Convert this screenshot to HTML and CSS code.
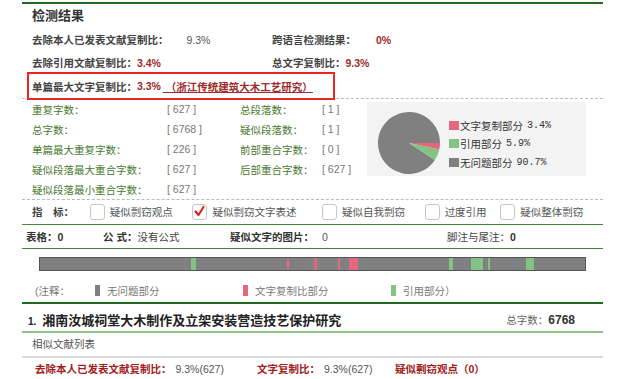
FILE: index.html
```html
<!DOCTYPE html>
<html lang="zh-CN">
<head>
  <meta charset="UTF-8">
  <title>检测结果</title>
  <link rel="stylesheet" href="styles.css">
</head>
<body>
  <div class="report">
    <h1 class="title">检测结果</h1>

    <div class="sum-row">
      <div class="sum-col"><span class="lbl">去除本人已发表文献复制比：</span><span class="val-plain first">9.3%</span></div>
      <div class="sum-col"><span class="lbl">跨语言检测结果：</span><span class="val-red cross">0%</span></div>
    </div>
    <div class="sum-row">
      <div class="sum-col"><span class="lbl">去除引用文献复制比：</span><span class="val-red">3.4%</span></div>
      <div class="sum-col"><span class="lbl">总文字复制比：</span><span class="val-red">9.3%</span></div>
    </div>
    <div class="sum-row sum-last">
      <div class="mark-box"></div>
      <span class="lbl">单篇最大文字复制比：</span><span class="val-red">3.3%</span><a class="src-link" href="#">&nbsp;（浙江传统建筑大木工艺研究）</a>
    </div>

    <div class="stats">
      <div class="stats-grid">
        <span class="s-lbl">重复字数：</span><span class="s-val">[ 627 ]</span>
        <span class="s-lbl">总段落数：</span><span class="s-val">[ 1 ]</span>
        <span class="s-lbl">总字数：</span><span class="s-val">[ 6768 ]</span>
        <span class="s-lbl">疑似段落数：</span><span class="s-val">[ 1 ]</span>
        <span class="s-lbl">单篇最大重复字数：</span><span class="s-val">[ 226 ]</span>
        <span class="s-lbl">前部重合字数：</span><span class="s-val">[ 0 ]</span>
        <span class="s-lbl">疑似段落最大重合字数：</span><span class="s-val">[ 627 ]</span>
        <span class="s-lbl">后部重合字数：</span><span class="s-val">[ 627 ]</span>
        <span class="s-lbl">疑似段落最小重合字数：</span><span class="s-val">[ 627 ]</span>
      </div>
      <div class="pie-box">
        <svg class="pie" width="82" height="74" viewBox="0 0 82 74">
          <g transform="translate(42 41)">
            <path d="M0 0 L25.86 17.10 A31 31 0 1 1 31 0 Z" fill="#808080"/>
            <path d="M0 0 L31 0 A31 31 0 0 1 30.30 6.57 Z" fill="#e3677d"/>
            <path d="M0 0 L30.30 6.57 A31 31 0 0 1 25.86 17.10 Z" fill="#85c384"/>
          </g>
        </svg>
        <ul class="pie-legend">
          <li><i class="sw sw-red"></i>文字复制部分 <em>3.4%</em></li>
          <li><i class="sw sw-green"></i>引用部分 <em>5.9%</em></li>
          <li><i class="sw sw-gray"></i>无问题部分 <em>90.7%</em></li>
        </ul>
      </div>
    </div>

    <div class="indicators">
      <span class="ind-lbl">指　标：</span>
      <label class="chk"><span class="box"></span>疑似剽窃观点</label>
      <label class="chk"><span class="box"><svg width="13" height="13" viewBox="0 0 13 13"><path d="M2.5 6.5 L5.5 10 L10.5 2" fill="none" stroke="#e02424" stroke-width="2.2" stroke-linecap="round" stroke-linejoin="round"/></svg></span>疑似剽窃文字表述</label>
      <label class="chk"><span class="box"></span>疑似自我剽窃</label>
      <label class="chk"><span class="box"></span>过度引用</label>
      <label class="chk"><span class="box"></span>疑似整体剽窃</label>
    </div>

    <div class="counts">
      <span class="c-col c1"><b class="c-lbl">表格：</b><b>0</b></span>
      <span class="c-col c2"><b class="c-lbl">公 式：</b>没有公式</span>
      <span class="c-col c3"><b class="c-lbl">疑似文字的图片：</b><span class="c-num">0</span></span>
      <span class="c-col"><span class="c-lbl">脚注与尾注：</span><b>0</b></span>
    </div>

    <div class="bar-area">
      <svg class="bar" width="547" height="14" viewBox="0 0 547 14">
        <rect x="0.5" y="0.5" width="546" height="13" fill="#808080" stroke="#555"/>
        <rect x="152" y="1" width="5" height="12" fill="#85c384"/>
        <rect x="248" y="1" width="2" height="12" fill="#e3677d"/>
        <rect x="275" y="1" width="3" height="12" fill="#e3677d"/>
        <rect x="299" y="1" width="2" height="12" fill="#e3677d"/>
        <rect x="310" y="1" width="9" height="12" fill="#e3677d"/>
        <rect x="410" y="1" width="4" height="12" fill="#85c384"/>
        <rect x="432" y="1" width="12" height="12" fill="#85c384"/>
        <rect x="449" y="1" width="2" height="12" fill="#85c384"/>
        <rect x="487" y="1" width="8" height="12" fill="#85c384"/>
      </svg>
      <div class="bar-legend">
        <span class="bl-note">(注释：</span>
        <span class="bl-item"><i class="bl-sw sw-gray"></i>无问题部分</span>
        <span class="bl-item"><i class="bl-sw sw-red"></i>文字复制比部分</span>
        <span class="bl-item"><i class="bl-sw sw-green"></i>引用部分）</span>
      </div>
    </div>

    <div class="doc-head">
      <div class="doc-title"><span class="doc-no">1.</span>湘南汝城祠堂大木制作及立架安装营造技艺保护研究</div>
      <div class="doc-total">总字数：<b>6768</b></div>
    </div>
    <div class="doc-sub">相似文献列表</div>
    <div class="doc-row">
      <span class="d-col d1"><b class="d-lbl">去除本人已发表文献复制比：</b>9.3%(627)</span>
      <span class="d-col d2"><b class="d-lbl">文字复制比：</b>9.3%(627)</span>
      <span class="d-col"><b class="d-lbl">疑似剽窃观点（0）</b></span>
    </div>
  </div>
</body>
</html>
```

FILE: styles.css
```css
body {
  margin: 0;
  padding-top: 2px;
  background-color: #fff;
  font-family: "Liberation Sans", "Noto Sans CJK SC", sans-serif;
  font-size: 10.5px;
  color: #555;
}

.report {
  margin-left: 22px;
  width: 581px;
  border-top: 2px solid #1f6b1f;
}

.title {
  margin: 0;
  height: 24px;
  padding-left: 10px;
  font-size: 13px;
  line-height: 24px;
  color: #333;
}

/* summary rows */
.sum-row {
  display: flex;
  align-items: center;
  height: 23px;
  padding-left: 10px;
}

.sum-last {
  position: relative;
  height: 24px;
  border-bottom: 1px dashed #bbb;
}

.sum-col {
  display: flex;
  align-items: center;
  width: 240px;
}

.lbl {
  font-weight: bold;
  color: #444;
}

.val-plain {
  color: #555;
}

.val-plain.first {
  margin-left: 18px;
}

.val-red {
  font-weight: bold;
  color: #9e2a2a;
}

.val-red.cross {
  margin-left: 20px;
}

.src-link {
  color: #9e2a2a;
  font-weight: bold;
  text-decoration: underline;
  margin-left: 2px;
}

.mark-box {
  position: absolute;
  left: 5px;
  top: -2px;
  width: 304px;
  height: 24px;
  border: 2px solid #ec2424;
}

/* statistics */
.stats {
  display: flex;
  align-items: flex-start;
  height: 100px;
  border-bottom: 1px dashed #bbb;
}

.stats-grid {
  display: grid;
  grid-template-columns: 135px 73px 82px 50px;
  grid-auto-rows: 20px;
  align-items: center;
  width: 345px;
  padding-left: 10px;
  box-sizing: border-box;
}

.s-lbl {
  color: #487a2e;
}

.s-val {
  color: #777;
}

.pie-box {
  display: flex;
  align-items: flex-start;
  width: 219px;
  height: 74px;
  margin-top: 3px;
  background-color: #f3f3f3;
}

.pie-legend {
  list-style: none;
  margin: 0;
  padding: 14px 0 0 0;
  font-size: 10.5px;
  color: #333;
}

.pie-legend li {
  display: flex;
  align-items: center;
  height: 18.5px;
}

.pie-legend em {
  font-style: normal;
  font-family: "Liberation Mono", monospace;
  font-size: 10px;
  margin-left: 4px;
}

.sw {
  display: inline-block;
  width: 10px;
  height: 9px;
  margin-right: 1px;
}

.sw-red { background-color: #e3677d; }
.sw-green { background-color: #85c384; }
.sw-gray { background-color: #808080; }

/* indicators */
.indicators {
  display: flex;
  align-items: center;
  height: 23px;
  padding: 0 0 1px 10px;
  border-bottom: 1px solid #3f8a33;
  color: #555;
}

.ind-lbl {
  width: 58px;
  font-weight: bold;
  color: #444;
}

.chk {
  display: flex;
  align-items: center;
  width: 103px;
}

.chk:nth-of-type(2) { width: 130px; }
.chk:nth-of-type(4) { width: 76px; }

.box {
  display: flex;
  align-items: center;
  justify-content: center;
  width: 15px;
  height: 16px;
  margin-right: 5px;
  border: 1px solid #c6c6c6;
  border-radius: 3px;
  box-sizing: border-box;
  background-color: #fff;
}

/* counts */
.counts {
  display: flex;
  align-items: center;
  height: 23px;
  padding-left: 4px;
  border-bottom: 1px solid #3f8a33;
  color: #444;
}

.c-col {
  display: flex;
  align-items: center;
}

.c1 { width: 77px; }
.c2 { width: 127px; }
.c3 { width: 217px; }

.c-lbl {
  color: #444;
}

.c3 .c-num {
  margin-left: 8px;
  color: #555;
}

.c-col b {
  color: #333;
}

/* bar */
.bar-area {
  padding: 8px 0 2px 0;
}

.bar {
  display: block;
  margin-left: 17px;
}

.bar-legend {
  display: flex;
  align-items: center;
  height: 20px;
  margin-top: 9px;
  padding-left: 13px;
  color: #777;
}

.bl-note {
  width: 60px;
}

.bl-item {
  display: flex;
  align-items: center;
  width: 148px;
}

.bl-item:last-child {
  width: 150px;
}

.bl-sw {
  display: inline-block;
  width: 5px;
  height: 11px;
  margin-right: 7px;
}

/* document section */
.doc-head {
  display: flex;
  align-items: center;
  justify-content: space-between;
  height: 23px;
  padding: 4px 28px 0 6px;
  border-top: 2px solid #1f6b1f;
  border-bottom: 2px solid #8fc18a;
}

.doc-title {
  font-size: 13px;
  font-weight: bold;
  color: #222;
}

.doc-no {
  font-size: 10px;
  margin-right: 6px;
}

.doc-total {
  color: #666;
}

.doc-total b {
  font-size: 12px;
  color: #333;
}

.doc-sub {
  height: 23px;
  line-height: 23px;
  padding-left: 10px;
  border-bottom: 2px solid #ddd;
  color: #555;
}

.doc-row {
  display: flex;
  align-items: center;
  height: 21px;
  padding-left: 13px;
  color: #555;
}

.d-col {
  display: flex;
  align-items: center;
}

.d1 { width: 222px; }
.d2 { width: 138px; }

.d-lbl {
  color: #a02020;
  margin-right: 4px;
}
```
